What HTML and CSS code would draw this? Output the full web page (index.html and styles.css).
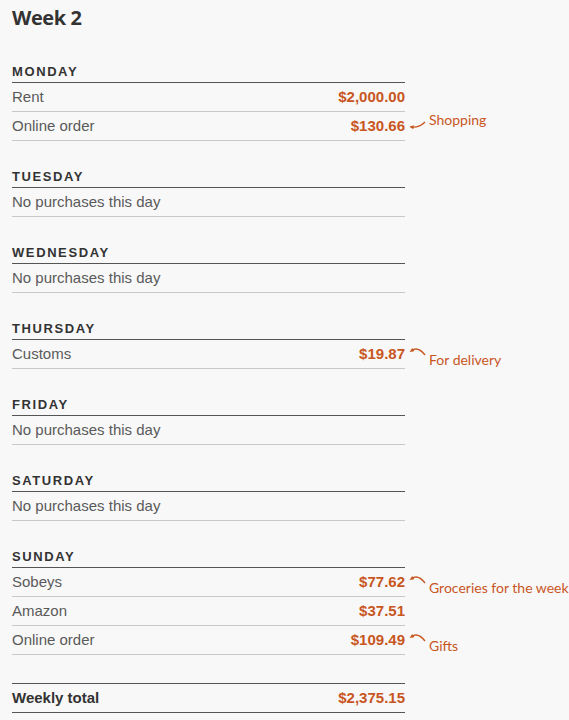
FILE: index.html
```html
<!DOCTYPE html>
<html lang="en">
<head>
<meta charset="utf-8">
<title>Week 2</title>
<link rel="stylesheet" href="styles.css">
</head>
<body>
<main class="week">
  <h1 class="week-title">Week 2</h1>

  <section class="day">
    <h2 class="day-name">Monday</h2>
    <div class="row"><span class="item">Rent</span><span class="amount">$2,000.00</span></div>
    <div class="row"><span class="item">Online order</span><span class="amount">$130.66</span>
      <span class="note note-up"><svg class="arrow" width="20" height="16" viewBox="0 0 20 16"><path d="M4 11 Q12 12 18 6" fill="none" stroke="currentColor" stroke-width="1.4"/><polygon points="2.3,10.8 6.8,9.2 6.4,13.3" fill="currentColor"/></svg>Shopping</span>
    </div>
  </section>

  <section class="day">
    <h2 class="day-name">Tuesday</h2>
    <div class="row"><span class="item">No purchases this day</span></div>
  </section>

  <section class="day">
    <h2 class="day-name">Wednesday</h2>
    <div class="row"><span class="item">No purchases this day</span></div>
  </section>

  <section class="day">
    <h2 class="day-name">Thursday</h2>
    <div class="row"><span class="item">Customs</span><span class="amount">$19.87</span>
      <span class="note note-down"><svg class="arrow" width="20" height="12" viewBox="0 0 20 12"><path d="M4.5 4.6 Q11 0 18 9" fill="none" stroke="currentColor" stroke-width="1.4"/><polygon points="2.6,5.9 5.2,2 7.4,5.2" fill="currentColor"/></svg>For delivery</span>
    </div>
  </section>

  <section class="day">
    <h2 class="day-name">Friday</h2>
    <div class="row"><span class="item">No purchases this day</span></div>
  </section>

  <section class="day">
    <h2 class="day-name">Saturday</h2>
    <div class="row"><span class="item">No purchases this day</span></div>
  </section>

  <section class="day">
    <h2 class="day-name">Sunday</h2>
    <div class="row"><span class="item">Sobeys</span><span class="amount">$77.62</span>
      <span class="note note-down"><svg class="arrow" width="20" height="12" viewBox="0 0 20 12"><path d="M4.5 4.6 Q11 0 18 9" fill="none" stroke="currentColor" stroke-width="1.4"/><polygon points="2.6,5.9 5.2,2 7.4,5.2" fill="currentColor"/></svg>Groceries for the week</span>
    </div>
    <div class="row"><span class="item">Amazon</span><span class="amount">$37.51</span></div>
    <div class="row"><span class="item">Online order</span><span class="amount">$109.49</span>
      <span class="note note-down"><svg class="arrow" width="20" height="12" viewBox="0 0 20 12"><path d="M4.5 4.6 Q11 0 18 9" fill="none" stroke="currentColor" stroke-width="1.4"/><polygon points="2.6,5.9 5.2,2 7.4,5.2" fill="currentColor"/></svg>Gifts</span>
    </div>
  </section>

  <div class="total"><span class="total-label">Weekly total</span><span class="amount">$2,375.15</span></div>
</main>
</body>
</html>
```

FILE: styles.css
```css
html, body {
  margin: 0;
  padding: 0;
  background: #f8f8f8;
}

body {
  font-family: "Liberation Sans", Arial, sans-serif;
  color: #5a5a5a;
}

.week {
  width: 393px;
  padding: 0 12px;
}

.week-title {
  font-family: "Open Sans", "Noto Sans", sans-serif;
  font-weight: 700;
  font-size: 20px;
  line-height: 28px;
  letter-spacing: -0.4px;
  color: #333;
  margin: 4px 0 32px;
}

.day {
  margin-top: 28px;
}

.week-title + .day {
  margin-top: 32px;
}

.day-name {
  margin: 0;
  font-size: 13px;
  font-weight: bold;
  line-height: 16px;
  letter-spacing: 1.6px;
  text-transform: uppercase;
  color: #333;
  padding-bottom: 2px;
  border-bottom: 1px solid #555;
}

.row {
  position: relative;
  display: flex;
  justify-content: space-between;
  align-items: center;
  height: 28px;
  font-size: 15px;
  line-height: 28px;
  border-bottom: 1px solid #c8c8c8;
}

.amount {
  font-weight: bold;
  color: #c8561f;
}

.note {
  position: absolute;
  left: calc(100% + 24px);
  font-family: Lato, "Open Sans", sans-serif;
  font-size: 14px;
  line-height: 16px;
  color: #c8561f;
  white-space: nowrap;
}

.note-up {
  top: 0;
}

.note-down {
  top: 12px;
}

.arrow {
  position: absolute;
  left: -22px;
}

.note-up .arrow {
  top: 4px;
}

.note-down .arrow {
  top: -6px;
}

.total {
  display: flex;
  justify-content: space-between;
  align-items: center;
  margin-top: 28px;
  height: 28px;
  font-size: 15px;
  line-height: 28px;
  border-top: 1px solid #555;
  border-bottom: 1px solid #555;
}

.total-label {
  font-weight: bold;
  color: #333;
}
```
